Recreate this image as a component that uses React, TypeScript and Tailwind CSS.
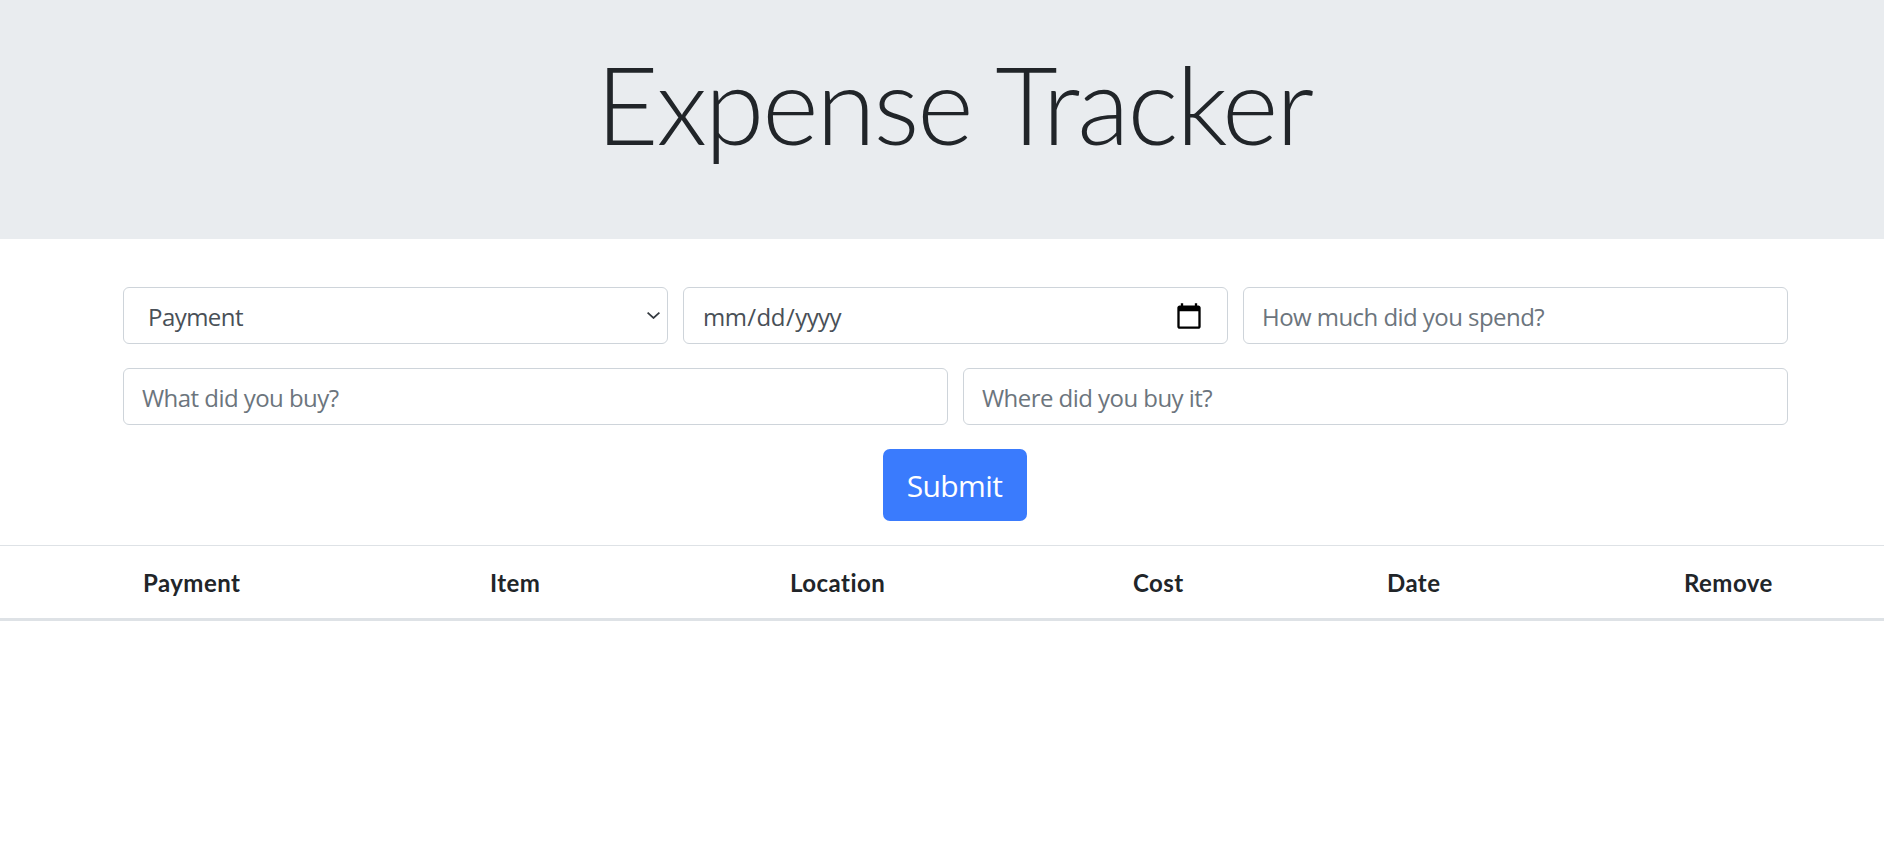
const fieldClass =
  "h-[57px] w-full rounded-[6px] border border-[#ced4da] bg-white pt-[2px] text-[24px] tracking-[-0.55px] text-[#495057] placeholder:text-[#6c757d]";

export default function App() {
  return (
    <div className="min-h-[862px] bg-white font-['Open_Sans',sans-serif] text-[#212529]">
      <header className="flex h-[239px] justify-center bg-[#e9ecef] pl-[24px] pt-[38px]">
        <h1 className="font-['Lato',sans-serif] text-[108px] font-light leading-[130px] tracking-[-2.2px]">Expense Tracker</h1>
      </header>

      <form className="flex flex-col gap-[24px] pl-[123px] pr-[96px] pt-[48px] pb-[24px]">
        <div className="grid grid-cols-3 gap-[15px]">
          <div className="relative">
            <select className={`${fieldClass} appearance-none pl-[24px] pr-[40px]`}>
              <option>Payment</option>
            </select>
            <svg
              viewBox="0 0 13 7"
              className="pointer-events-none absolute right-[8px] top-[25px] h-[7px] w-[13px]"
              fill="none"
              stroke="#343a40"
              strokeWidth="1.7"
            >
              <path d="M0.6 0.6 L6.5 6 L12.4 0.6" />
            </svg>
          </div>
          <input
            type="date"
            className={`${fieldClass} pl-[18px] pr-[23px] [&::-webkit-calendar-picker-indicator]:m-0 [&::-webkit-calendar-picker-indicator]:h-[30px] [&::-webkit-calendar-picker-indicator]:w-[30px] [&::-webkit-calendar-picker-indicator]:p-0`}
          />
          <input placeholder="How much did you spend?" className={`${fieldClass} px-[18px]`} />
        </div>
        <div className="grid grid-cols-2 gap-[15px]">
          <input placeholder="What did you buy?" className={`${fieldClass} px-[18px]`} />
          <input placeholder="Where did you buy it?" className={`${fieldClass} px-[18px]`} />
        </div>
        <div className="flex justify-center pr-[2px]">
          <button
            type="button"
            className="h-[72px] w-[144px] rounded-[7px] bg-[#3a7bfd] text-[30px] tracking-[-0.6px] text-white"
          >
            Submit
          </button>
        </div>
      </form>

      <table className="w-full border-t border-[#dee2e6] text-left font-['Lato',sans-serif] text-[24px] tracking-[0.45px]">
        <thead>
          <tr className="h-[74px] border-b-[3px] border-[#dee2e6]">
            <th className="w-[490px] pl-[143px] pt-[2px] font-bold">Payment</th>
            <th className="w-[300px] pt-[2px] font-bold">Item</th>
            <th className="w-[343px] pt-[2px] font-bold">Location</th>
            <th className="w-[254px] pt-[2px] font-bold">Cost</th>
            <th className="w-[297px] pt-[2px] font-bold">Date</th>
            <th className="pt-[2px] font-bold">Remove</th>
          </tr>
        </thead>
      </table>
    </div>
  );
}
